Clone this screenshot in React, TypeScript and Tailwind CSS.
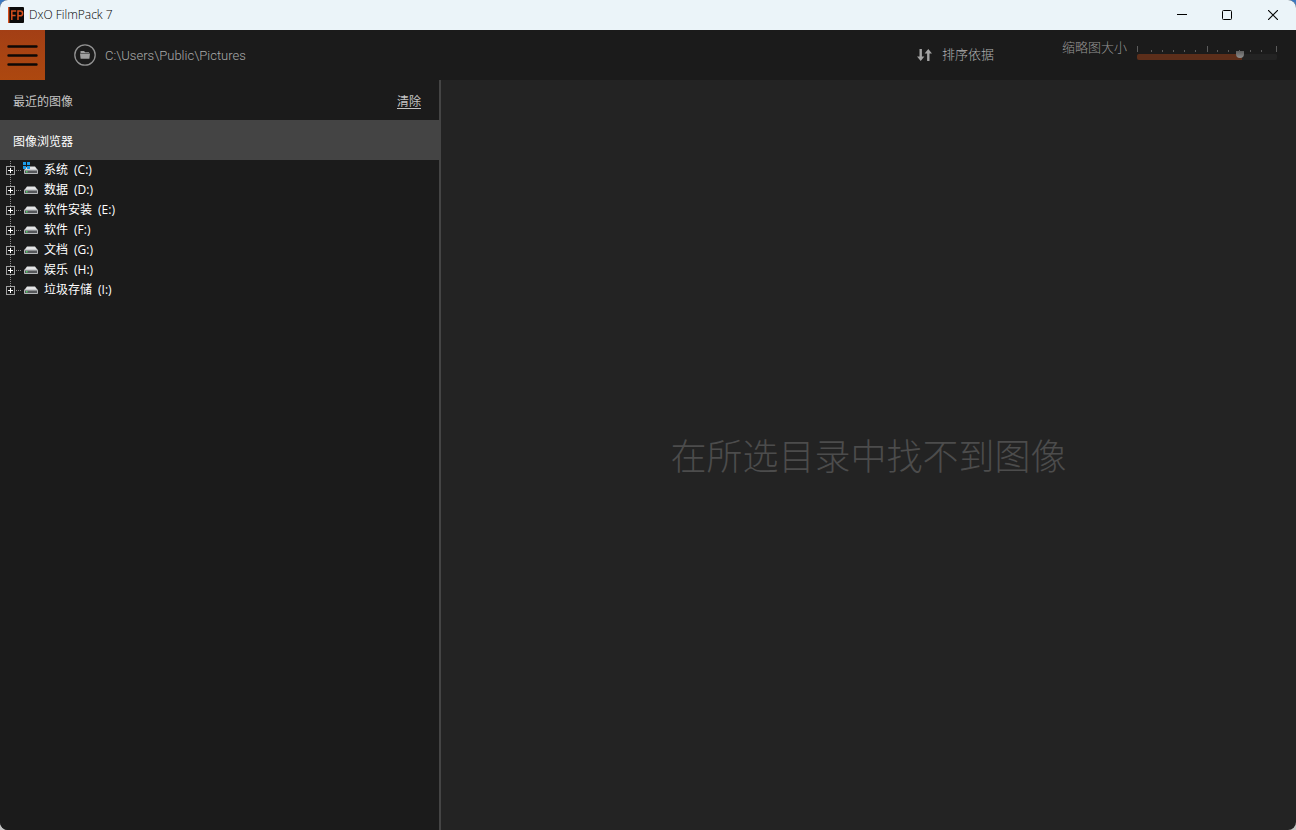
import React, { useState } from 'react';

interface Drive {
  letter: string;
  name: string;
  system?: boolean;
}

const drives: Drive[] = [
  { letter: 'C', name: '系统', system: true },
  { letter: 'D', name: '数据' },
  { letter: 'E', name: '软件安装' },
  { letter: 'F', name: '软件' },
  { letter: 'G', name: '文档' },
  { letter: 'H', name: '娱乐' },
  { letter: 'I', name: '垃圾存储' },
];

const majorTicks = [0, 70, 139];
const minorTicks = [14, 25, 36, 47, 58, 80, 91, 102, 113, 124];

const AppLogo = () => (
  <svg width="16" height="16" viewBox="0 0 16 16" aria-hidden="true">
    <rect width="16" height="16" rx="1" fill="#0b0a0a" />
    <rect width="1.4" height="16" fill="#d9501e" />
    <path d="M3.8 13V4h4.4M3.8 8.4h3.8M10 13V4h2.2a2.3 2.3 0 0 1 0 4.8H10" fill="none" stroke="#d9501e" strokeWidth="1.5" />
  </svg>
);

const DriveIcon = ({ system }: { system?: boolean }) => (
  <svg width="16" height="16" viewBox="0 0 16 16" aria-hidden="true">
    <path d="M4 4.6h8L14.600 8H1.400z" fill="#e4e5e6" />
    <rect x="1" y="7.6" width="14" height="4.4" rx=".8" fill="#b4b6b8" />
    <rect x="2" y="8.6" width="12" height="2.4" fill="#55575a" />
    <rect x="3" y="9" width="1.5" height="1.5" fill="#55d668" />
    {system && (
      <path d="M0 0h3v3H0zM4 0h3v3H4zM0 4h3v3H0zM4 4h3v3H4z" fill="#1d9be8" />
    )}
  </svg>
);

const Expander = ({ last }: { last: boolean }) => (
  <svg width="16" height="20" viewBox="0 0 16 20" shapeRendering="crispEdges" aria-hidden="true">
    <path d={last ? 'M5.5 1v5' : 'M5.5 1v19'} stroke="#8a8a8a" strokeDasharray="1 1" fill="none" />
    <path d="M11 10.5h5" stroke="#8a8a8a" strokeDasharray="1 1" fill="none" />
    <rect x="1.5" y="6.5" width="8" height="8" fill="#1b1b1b" stroke="#a0a0a0" />
    <path d="M3 10.5h5M5.5 8v5" stroke="#fff" fill="none" />
  </svg>
);

const TitleBar = () => (
  <header className="flex h-[30px] shrink-0 items-center justify-between bg-[#ebf4f9] pl-2 text-black">
    <div className="flex items-center gap-[5px]">
      <AppLogo />
      <h1 className="text-[12px] font-light leading-4">DxO FilmPack 7</h1>
    </div>
    <div className="flex h-full">
      <button aria-label="最小化" className="flex w-[45px] items-center justify-center">
        <svg width="10" height="10" viewBox="0 0 10 10"><path d="M0 4.5h10" stroke="#000" /></svg>
      </button>
      <button aria-label="最大化" className="flex w-[46px] items-center justify-center">
        <svg width="10" height="10" viewBox="0 0 10 10"><rect x=".5" y=".5" width="9" height="9" rx="1" fill="none" stroke="#000" /></svg>
      </button>
      <button aria-label="关闭" className="flex w-[46px] items-center justify-center">
        <svg width="10" height="10" viewBox="0 0 10 10"><path d="M0 0l10 10M10 0L0 10" stroke="#000" strokeWidth="1.1" /></svg>
      </button>
    </div>
  </header>
);

const SizeSlider = () => {
  const [size, setSize] = useState(75);
  const fill = `linear-gradient(to right, #5c2e1a ${size}%, #232323 ${size}%)`;

  return (
    <div className="flex items-start gap-2.5 self-start pt-[7px]">
      <label htmlFor="thumb-size" className="text-[13px] font-light leading-5 text-[#969696]">缩略图大小</label>
      <div className="flex w-[140px] flex-col gap-0.5 pt-[9px]">
        <svg width="140" height="6" viewBox="0 0 140 6" shapeRendering="crispEdges" aria-hidden="true">
          {majorTicks.map(x => <rect key={x} x={x} y="0" width="1" height="6" fill="#5c5c5c" />)}
          {minorTicks.map(x => <rect key={x} x={x} y="4" width="1" height="2" fill="#5c5c5c" />)}
        </svg>
        <input
          id="thumb-size"
          type="range"
          min={0}
          max={100}
          value={size}
          onChange={e => setSize(Number(e.target.value))}
          style={{ background: fill }}
          className="block h-1.5 w-full appearance-none rounded-xs [&::-webkit-slider-thumb]:-mt-1.5 [&::-webkit-slider-thumb]:h-[7px] [&::-webkit-slider-thumb]:w-2 [&::-webkit-slider-thumb]:appearance-none [&::-webkit-slider-thumb]:rounded-b-full [&::-webkit-slider-thumb]:bg-linear-to-b [&::-webkit-slider-thumb]:from-[#5c5c5c] [&::-webkit-slider-thumb]:to-[#8e8e8e]"
        />
      </div>
    </div>
  );
};

const Toolbar = () => (
  <div className="flex h-[50px] shrink-0 items-center justify-between bg-[#1b1b1b] pr-[19px]">
    <div className="flex h-full items-center">
      <button aria-label="菜单" className="flex h-full w-[45px] items-center justify-center bg-linear-to-b from-[#a33f15] to-[#ad480f]">
        <svg width="31" height="22" viewBox="0 0 31 22">
          <path d="M1.5 2.5h28M1.5 11.5h28M1.5 20.5h28" stroke="#0d0806" strokeWidth="2.4" strokeLinecap="round" />
        </svg>
      </button>
      <button className="ml-[29px] flex items-center gap-[9px]">
        <svg width="22" height="22" viewBox="0 0 22 22" aria-hidden="true">
          <circle cx="11" cy="11" r="10.2" fill="none" stroke="#929292" strokeWidth="1.3" />
          <path d="M6.5 7h3.6l1 1.2h4V9H6.5zM6 9.6h10l-.6 5.2H6.6z" fill="#a0a0a0" />
        </svg>
        <span className="pt-0.5 font-[Roboto,sans-serif] text-[13px] font-light leading-5 text-[#aaa]">C:\Users\Public\Pictures</span>
      </button>
    </div>
    <div className="flex h-full items-center gap-[68px]">
      <button className="flex items-center gap-2.5 pb-0.5 text-[#b0b0b0]">
        <svg width="15" height="14" viewBox="0 0 15 14" className="mt-0.5" fill="#a2a2a2" aria-hidden="true">
          <path d="M2.5 1h2.4v7.5h2.5L3.7 13 0 8.5h2.5z" />
          <path d="M10.1 13h2.4V5.5H15L11.3 1 7.6 5.5h2.5z" />
        </svg>
        <span className="text-[13px] font-light leading-5">排序依据</span>
      </button>
      <SizeSlider />
    </div>
  </div>
);

const Sidebar = () => (
  <aside className="flex w-[441px] shrink-0 flex-col border-r-2 border-[#444] bg-[#1b1b1b]">
    <div className="flex h-10 items-center justify-between pt-[3px] pl-[13px] pr-[18px] text-[12px] text-[#c4c4c4]">
      <h2>最近的图像</h2>
      <a href="#clear" className="underline underline-offset-2">清除</a>
    </div>
    <h2 className="flex h-10 items-center bg-[#444] px-[13px] pt-[3px] text-[12px] text-white">图像浏览器</h2>
    <ul>
      {drives.map((drive, idx) => (
        <li key={drive.letter}>
          <button className="flex h-5 items-center pl-[5px] text-[12px] leading-5 text-white">
            <Expander last={idx === drives.length - 1} />
            <span className="ml-0.5 mr-[5px]"><DriveIcon system={drive.system} /></span>
            <span className="flex gap-1.5">
              <span>{drive.name}</span>
              <span>({drive.letter}:)</span>
            </span>
          </button>
        </li>
      ))}
    </ul>
  </aside>
);

export default function App() {
  return (
    <div className="min-h-screen bg-linear-to-b from-[#3a78c0] to-[#c4c4c4] to-10%">
      <div className="flex min-h-screen flex-col overflow-hidden rounded-lg bg-[#232323] font-['Open_Sans','Noto_Sans_CJK_SC',sans-serif]">
        <TitleBar />
        <Toolbar />
        <div className="flex flex-1">
          <Sidebar />
          <main className="flex flex-1 items-center justify-center px-4 pt-1">
            <p className="text-center text-[36px] font-light leading-[48px] text-[#4c4c4c]">在所选目录中找不到图像</p>
          </main>
        </div>
      </div>
    </div>
  );
}
